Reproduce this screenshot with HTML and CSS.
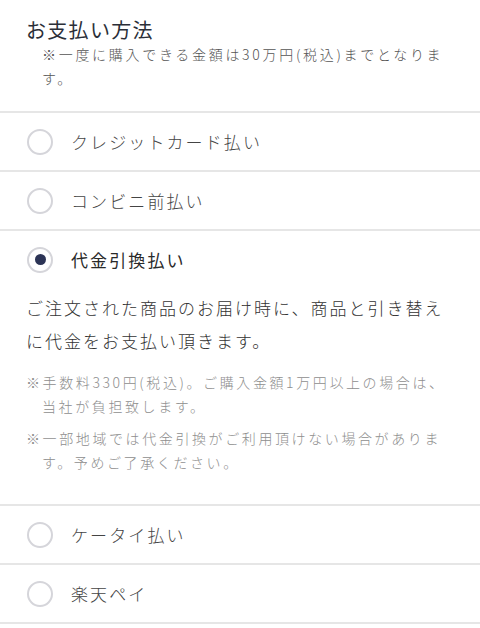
FILE: index.html
```html
<!DOCTYPE html>
<html lang="ja">
<head>
<meta charset="utf-8">
<link rel="stylesheet" href="styles.css">
</head>
<body>
<div class="page">
  <header class="head">
    <h2 class="title">お支払い方法</h2>
    <p class="limit">※一度に購入できる金額は30万円(税込)までとなります。</p>
  </header>
  <ul class="options">
    <li class="option">
      <div class="row"><span class="radio"></span><span class="label">クレジットカード払い</span></div>
    </li>
    <li class="option">
      <div class="row"><span class="radio"></span><span class="label">コンビニ前払い</span></div>
    </li>
    <li class="option selected">
      <div class="row"><span class="radio"></span><span class="label">代金引換払い</span></div>
      <div class="detail">
        <p class="desc">ご注文された商品のお届け時に、商品と引き替えに代金をお支払い頂きます。</p>
        <p class="note">※手数料330円(税込)。ご購入金額1万円以上の場合は、当社が負担致します。</p>
        <p class="note">※一部地域では代金引換がご利用頂けない場合があります。予めご了承ください。</p>
      </div>
    </li>
    <li class="option">
      <div class="row"><span class="radio"></span><span class="label">ケータイ払い</span></div>
    </li>
    <li class="option">
      <div class="row"><span class="radio"></span><span class="label">楽天ペイ</span></div>
    </li>
  </ul>
</div>
</body>
</html>
```
FILE: styles.css
```css
* { box-sizing: border-box; }
html, body {
  margin: 0;
  padding: 0;
  background: #ffffff;
}
body {
  font-family: "Noto Sans CJK JP", "Noto Sans", sans-serif;
  font-weight: 300;
  color: #333333;
}
.page {
  width: 480px;
}
.head {
  padding: 18px 26px 21px 26px;
}
.title {
  margin: 0;
  font-size: 20px;
  line-height: 24px;
  font-weight: 400;
  letter-spacing: 1.3px;
  color: #2b2f38;
}
.limit {
  margin: 0;
  padding-left: 16px;
  font-size: 14px;
  line-height: 24px;
  letter-spacing: 2.7px;
  color: #555555;
}
.options {
  list-style: none;
  margin: 0;
  padding: 0;
  border-bottom: 2px solid #e6e6e6;
}
.option {
  border-top: 2px solid #e6e6e6;
}
.row {
  height: 57px;
  display: flex;
  align-items: center;
  padding-left: 27px;
  gap: 18px;
}
.radio {
  width: 26px;
  height: 26px;
  border: 2px solid #d5d5da;
  border-radius: 50%;
  display: flex;
  align-items: center;
  justify-content: center;
  flex: none;
}
.selected .radio::after {
  content: "";
  width: 11px;
  height: 11px;
  border-radius: 50%;
  background: #2c3456;
}
.label {
  font-size: 17px;
  letter-spacing: 2.1px;
  color: #444444;
}
.selected .label {
  font-weight: 400;
  color: #2a2a2a;
}
.detail {
  padding: 3px 26px 30px 26px;
}
.desc {
  margin: 0 0 13px 0;
  font-size: 17px;
  line-height: 33px;
  letter-spacing: 2px;
  color: #333333;
}
.note {
  margin: 0 0 8px 0;
  padding-left: 16px;
  text-indent: -16px;
  font-size: 14px;
  line-height: 24px;
  letter-spacing: 2.6px;
  color: #8e8e8e;
}
.note:last-child {
  margin-bottom: 0;
}
```
